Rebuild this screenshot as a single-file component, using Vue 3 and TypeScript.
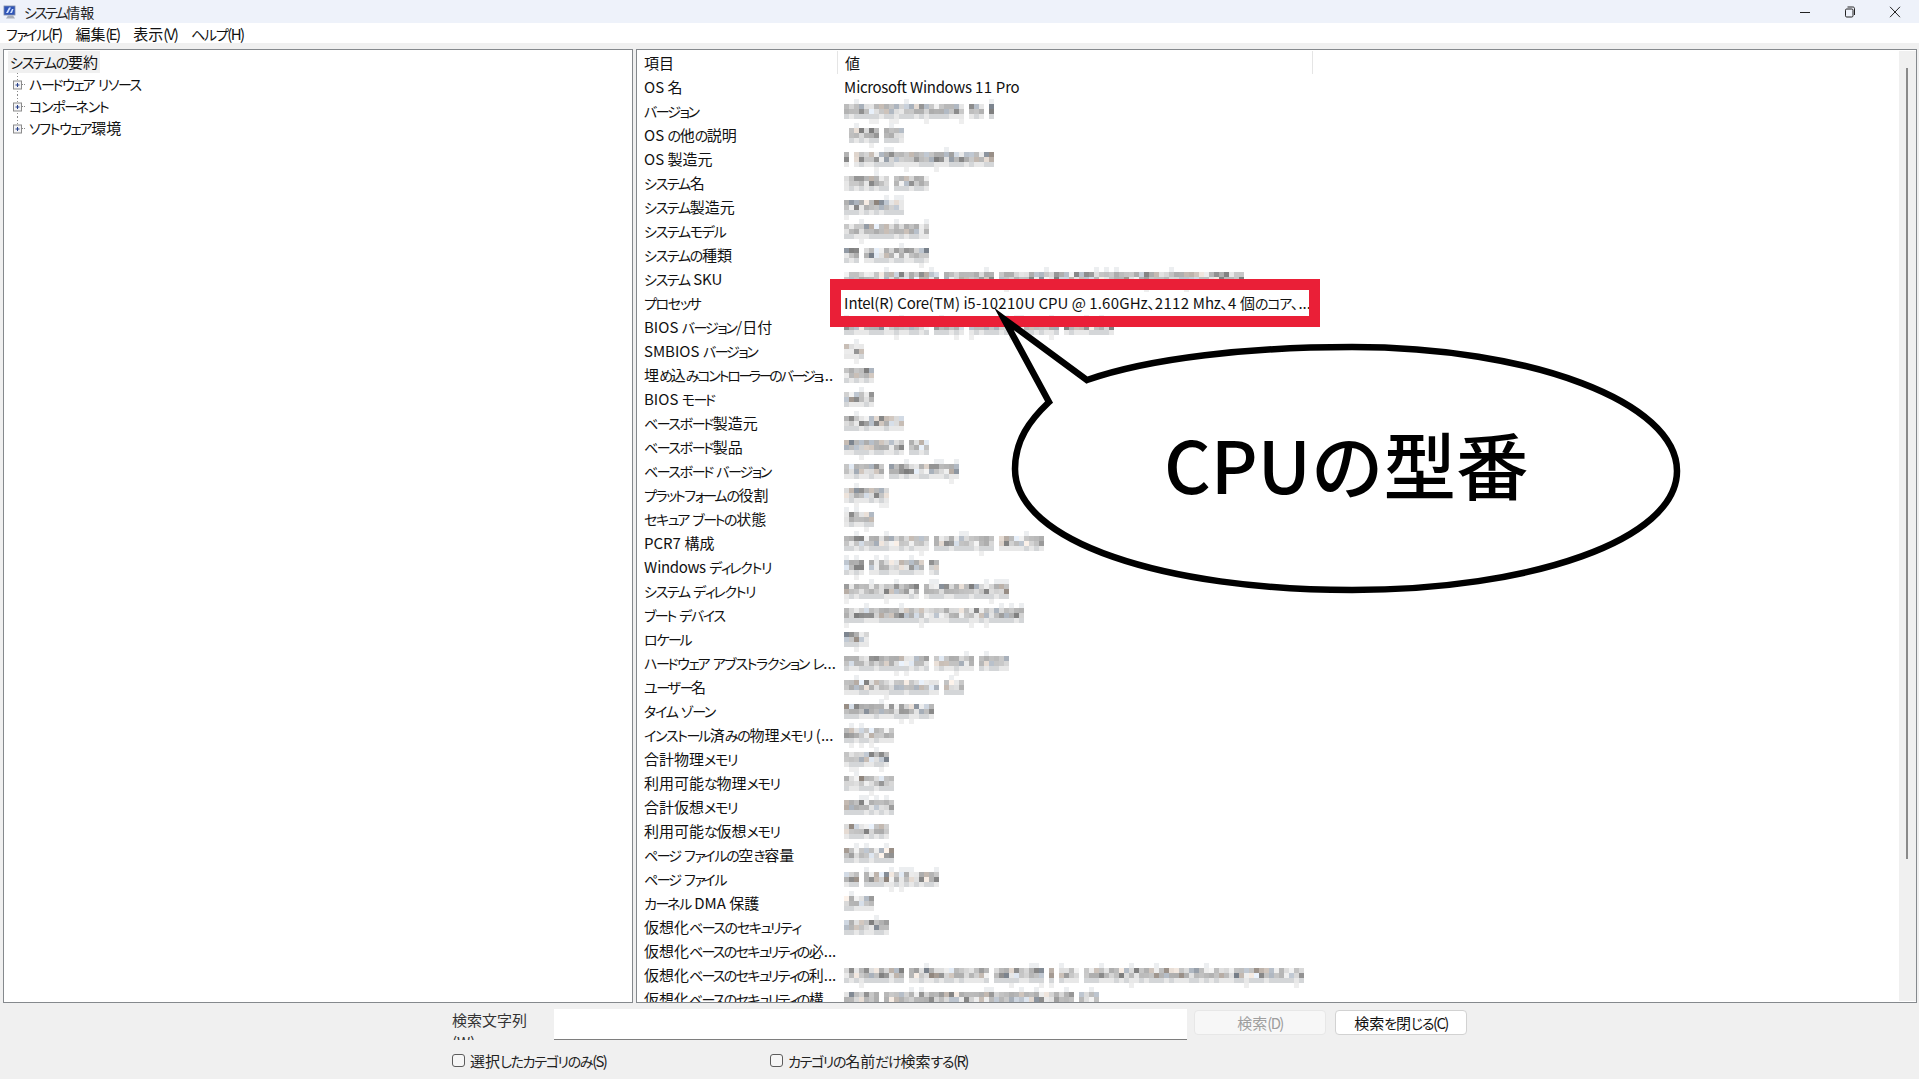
<script setup lang="ts">
import { h } from 'vue'

interface Cell { x: number; y: number; c: string }
interface Row { k: string; v?: string; w?: number }
interface Seg { t: string; c: string }

const raw: Row[] = [
  { k: 'OS 名', v: 'Microsoft Windows 11 Pro' },
  { k: 'バージョン', w: 150 },
  { k: 'OS の他の説明', w: 60 },
  { k: 'OS 製造元', w: 150 },
  { k: 'システム名', w: 85 },
  { k: 'システム製造元', w: 60 },
  { k: 'システムモデル', w: 85 },
  { k: 'システムの種類', w: 85 },
  { k: 'システム SKU', w: 400 },
  { k: 'プロセッサ', v: 'Intel(R) Core(TM) i5-10210U CPU @ 1.60GHz、2112 Mhz、4 個のコア、...' },
  { k: 'BIOS バージョン/日付', w: 270 },
  { k: 'SMBIOS バージョン', w: 20 },
  { k: '埋め込みコントローラーのバージョ...', w: 30 },
  { k: 'BIOS モード', w: 30 },
  { k: 'ベースボード製造元', w: 60 },
  { k: 'ベースボード製品', w: 85 },
  { k: 'ベースボード バージョン', w: 115 },
  { k: 'プラットフォームの役割', w: 45 },
  { k: 'セキュア ブートの状態', w: 30 },
  { k: 'PCR7 構成', w: 200 },
  { k: 'Windows ディレクトリ', w: 95 },
  { k: 'システム ディレクトリ', w: 165 },
  { k: 'ブート デバイス', w: 180 },
  { k: 'ロケール', w: 30 },
  { k: 'ハードウェア アブストラクション レ...', w: 165 },
  { k: 'ユーザー名', w: 120 },
  { k: 'タイム ゾーン', w: 90 },
  { k: 'インストール済みの物理メモリ (...', w: 50 },
  { k: '合計物理メモリ', w: 50 },
  { k: '利用可能な物理メモリ', w: 50 },
  { k: '合計仮想メモリ', w: 50 },
  { k: '利用可能な仮想メモリ', w: 50 },
  { k: 'ページ ファイルの空き容量', w: 50 },
  { k: 'ページ ファイル', w: 95 },
  { k: 'カーネル DMA 保護', w: 30 },
  { k: '仮想化ベースのセキュリティ', w: 45 },
  { k: '仮想化ベースのセキュリティの必...' },
  { k: '仮想化ベースのセキュリティの利...', w: 460 },
  { k: '仮想化ベースのセキュリティの構...', w: 255 },
]

let seed = 20240611
function rnd(): number {
  seed = (seed * 1664525 + 1013904223) >>> 0
  return seed / 4294967296
}
function shade(): string {
  const r = rnd()
  const g = r < 0.14 ? 125 + rnd() * 35 : r < 0.68 ? 172 + rnd() * 30 : 208 + rnd() * 36
  const t = rnd()
  const dr = t < 0.12 ? 10 : t < 0.24 ? -8 : 0
  const db = t < 0.12 ? -8 : t < 0.24 ? 10 : 0
  return `rgb(${Math.round(g + dr)},${Math.round(g)},${Math.round(g + db)})`
}
function mosaic(w: number): Cell[] {
  const out: Cell[] = []
  const cols = Math.round(w / 5)
  for (let i = 0; i < cols; i++) {
    if (rnd() < 0.06) continue
    if (rnd() < 0.16) out.push({ x: i * 5, y: 0, c: '#eceef0' })
    out.push({ x: i * 5, y: 5, c: shade() })
    out.push({ x: i * 5, y: 10, c: shade() })
    out.push({ x: i * 5, y: 15, c: rnd() < 0.45 ? '#e8e8e8' : '#d4d6d8' })
    if (rnd() < 0.08) out.push({ x: i * 5, y: 20, c: '#eeeeee' })
  }
  return out
}
function tightness(k: string): string {
  if (k.startsWith('埋め')) return 'tight-a'
  if (k.startsWith('仮想化') && k.endsWith('...')) return 'tight-b'
  return ''
}
const rows = raw.map((r) => ({ ...r, tight: tightness(r.k), cells: r.w ? mosaic(r.w) : [] }))
const tree = ['ハードウェア リソース', 'コンポーネント', 'ソフトウェア環境']
const menus = ['ファイル(F)', '編集(E)', '表示(V)', 'ヘルプ(H)']

// Yu Gothic UI sets kana and hotkey suffixes tighter than Noto does.
function kind(ch: string): string {
  if (/[ァィゥェォッャュョー]/.test(ch)) return 'k2'
  if (/[\u3040-\u30ff]/.test(ch)) return 'k1'
  if (/[a-z]/.test(ch)) return 'lo'
  if (/[0-9]/.test(ch)) return 'di'
  return 'ot'
}
function segments(s: string): Seg[] {
  const out: Seg[] = []
  const m = s.match(/\([A-Z]\)$/)
  const body = m ? s.slice(0, -3) : s
  for (const ch of body) {
    const c = kind(ch)
    const last = out[out.length - 1]
    if (last && last.c === c) last.t += ch
    else out.push({ t: ch, c })
  }
  if (m) out.push({ t: m[0], c: 'hk' })
  return out
}
const T = (props: { s: string }) => segments(props.s).map((p) => h('span', { class: p.c }, p.t))
T.props = ['s']
</script>

<template>
  <div class="window">
    <header class="title">
      <svg class="app-icon" width="14" height="14" viewBox="0 0 14 14">
        <rect x="1" y="1" width="11" height="9" fill="#2f55b8" stroke="#7d8ba8" stroke-width="0.8" />
        <path d="M3 8 6 2.5h2L5 8zM7 8l2-4h1.5L9 8z" fill="#cfe0ff" />
        <path d="M5 10.5h5l2 3H3z" fill="#a7adb8" />
      </svg>
      <span class="title-text"><T s="システム情報" /></span>
      <div class="controls">
        <span class="ctl"><svg width="12" height="12" viewBox="0 0 12 12"><path d="M1 6.5h10" stroke="#222" fill="none" /></svg></span>
        <span class="ctl"><svg width="12" height="12" viewBox="0 0 12 12"><rect x="1.5" y="3" width="7.5" height="8" rx="1.2" stroke="#222" fill="none" /><path d="M3.5 1h5.3c1.2 0 1.7.6 1.7 1.7V9" stroke="#222" fill="none" /></svg></span>
        <span class="ctl"><svg width="12" height="12" viewBox="0 0 12 12"><path d="M1 .8l10 10.4M11 .8 1 11.2" stroke="#222" fill="none" /></svg></span>
      </div>
    </header>

    <nav class="menu">
      <span v-for="m in menus" :key="m" class="menu-item"><T :s="m" /></span>
    </nav>

    <main class="panes">
      <section class="tree">
        <div class="root"><span class="root-label"><T s="システムの要約" /></span></div>
        <div v-for="(t, i) in tree" :key="t" class="node">
          <svg class="twig" width="26" height="22" viewBox="0 0 26 22">
            <path :d="i === 2 ? 'M13.5 0V11' : 'M13.5 0V22'" stroke="#8a8a8a" stroke-dasharray="1 2" fill="none" />
            <path d="M18 11.5h3" stroke="#8a8a8a" stroke-dasharray="1 1" fill="none" />
            <rect x="9.5" y="8" width="8" height="8" fill="#f4f4f6" stroke="#8b8b8b" />
            <path d="M11.5 12h4M13.5 10v4" stroke="#27408b" fill="none" />
          </svg>
          <span><T :s="t" /></span>
        </div>
      </section>

      <section class="details">
        <div class="table">
          <div class="thead">
            <span class="th th-k">項目</span>
            <span class="th th-v">値</span>
          </div>
          <div v-for="r in rows" :key="r.k" class="tr">
            <span class="td-k" :class="r.tight"><T :s="r.k" /></span>
            <span class="td-v">
              <T v-if="r.v" :s="r.v" />
              <svg v-else-if="r.w" class="mosaic" :width="r.w" height="25" shape-rendering="crispEdges">
                <rect v-for="(c, i) in r.cells" :key="i" :x="c.x" :y="c.y" width="5" height="5" :fill="c.c" />
              </svg>
            </span>
          </div>
        </div>
        <div class="scroll"><div class="thumb"></div></div>
      </section>

      <div class="red-box"></div>
      <svg class="bubble" width="1919" height="1079" viewBox="0 0 1919 1079">
        <path
          d="M1004 319 L1087 380 C1150 358 1250 347 1352 347 C1531 347 1677 402 1677 471 C1677 540 1531 590 1352 590 C1165 590 1015 542 1015 469 C1015 440 1030 420 1049 402 Z"
          fill="#fff" stroke="#000" stroke-width="6.5" stroke-miterlimit="12"
        />
      </svg>
      <div class="bubble-text">CPUの型番</div>
    </main>

    <footer class="search">
      <div class="search-row">
        <label class="search-label"><T s="検索文字列(W):" /></label>
        <input class="search-input" type="text" />
        <button class="btn btn-off" type="button"><T s="検索(D)" /></button>
        <button class="btn" type="button"><T s="検索を閉じる(C)" /></button>
      </div>
      <div class="check-row">
        <label class="check check-a"><input type="checkbox" /><span><T s="選択したカテゴリのみ(S)" /></span></label>
        <label class="check"><input type="checkbox" /><span><T s="カテゴリの名前だけ検索する(R)" /></span></label>
      </div>
    </footer>
  </div>
</template>

<style>
html, body { margin: 0; background: #f0f0f0; overflow: hidden; }
.k1 { font-size: 14px; letter-spacing: -1.3px; }
.k2 { font-size: 14px; letter-spacing: -2.5px; }
.lo { letter-spacing: -0.35px; }
.di { letter-spacing: 0.3px; }
.hk { letter-spacing: -1.7px; }
.tight-a .k1 { letter-spacing: -2.2px; }
.tight-a .k2 { letter-spacing: -3.4px; }
.tight-b .k1 { letter-spacing: -1.6px; }
.tight-b .k2 { letter-spacing: -2.8px; }
</style>

<style scoped>
.window {
  width: 1919px;
  height: 1079px;
  display: flex;
  flex-direction: column;
  background: #f0f0f0;
  color: #111;
  font-family: "Noto Sans CJK JP", "Noto Sans", sans-serif;
  font-size: 15px;
  font-feature-settings: "palt";
  overflow: hidden;
}
.title {
  height: 23px;
  flex: none;
  display: flex;
  align-items: center;
  background: #eef2fa;
  padding-left: 3px;
  padding-right: 2px;
}
.app-icon { flex: none; }
.title-text { margin-left: 7px; color: #222; font-size: 14px; }
.title-text :deep(.k1) { letter-spacing: -2.2px; }
.controls { margin-left: auto; display: flex; }
.ctl { width: 45px; height: 23px; display: flex; align-items: center; justify-content: center; }
.menu {
  height: 20px;
  flex: none;
  display: flex;
  align-items: center;
  gap: 14px;
  background: #fff;
  padding-left: 6px;
}
.panes {
  margin-top: 6px;
  height: 954px;
  flex: none;
  display: flex;
  gap: 3px;
  padding: 0 2px 0 3px;
}
.tree {
  width: 630px;
  flex: none;
  box-sizing: border-box;
  background: #fff;
  border: 1px solid #85898d;
  padding-top: 1px;
}
.root { height: 22px; padding-left: 4px; display: flex; }
.root-label { background: #f0f0f0; padding: 0 2px; width: 88px; line-height: 22px; white-space: nowrap; }
.node { height: 22px; display: flex; align-items: center; line-height: 22px; }
.node:first-of-type { margin-top: 1px; }
.twig { flex: none; margin-right: -1px; }
.details {
  flex: 1;
  display: flex;
  min-width: 0;
  box-sizing: border-box;
  background: #fff;
  border: 1px solid #85898d;
  padding: 1px 0 0 0;
}
.table { flex: 1; min-width: 0; overflow: hidden; }
.thead { display: flex; height: 24px; }
.th { box-sizing: border-box; height: 23px; line-height: 23px; border-right: 1px solid #e5e5e5; }
.th-k { width: 201px; padding-left: 7px; }
.th-v { width: 475px; padding-left: 7px; }
.tr { display: flex; height: 24px; line-height: 24px; white-space: nowrap; }
.td-k { width: 201px; flex: none; padding-left: 7px; box-sizing: border-box; overflow: hidden; }
.td-v { flex: 1; padding-left: 6px; position: relative; }
.mosaic { position: absolute; left: 6px; top: 0; }
.scroll { width: 17px; flex: none; background: #f0f0f0; margin-bottom: 1px; }
.thumb { width: 2px; height: 791px; margin: 17px 0 0 7px; background: #8a8a8a; }

.red-box {
  position: absolute;
  left: 830px;
  top: 279px;
  width: 468px;
  height: 26px;
  border: 11px solid #ea1f37;
  pointer-events: none;
}
.bubble { position: absolute; left: 0; top: 0; pointer-events: none; }
.bubble-text {
  position: absolute;
  left: 1164px;
  top: 411px;
  font-size: 72.5px;
  font-weight: 500;
  line-height: 104px;
  color: #000;
  white-space: nowrap;
  font-feature-settings: normal;
}

.search { flex: 1; padding-left: 452px; }
.search-row { display: flex; margin-top: 6px; height: 31px; align-items: flex-start; }
.search-label {
  width: 102px;
  flex: none;
  height: 31px;
  line-height: 22px;
  overflow: hidden;
  padding-right: 22px;
  box-sizing: border-box;
  color: #333;
}
.search-input {
  width: 633px;
  height: 31px;
  flex: none;
  box-sizing: border-box;
  border: 0;
  border-bottom: 1px solid #7e7e7e;
  background: #fff;
  outline: none;
  margin: 0 7px 0 0;
  padding: 0;
}
.btn {
  width: 132px;
  height: 25px;
  margin: 1px 9px 0 0;
  padding: 0;
  box-sizing: border-box;
  flex: none;
  background: #fff;
  border: 1px solid #d2d2d2;
  border-radius: 4px;
  color: #111;
  font: inherit;
  font-feature-settings: inherit;
  line-height: 23px;
}
.btn-off { background: #f7f7f7; border-color: #e7e7e7; color: #9e9e9e; }
.check-row { display: flex; margin-top: 8px; }
.check { display: flex; align-items: center; height: 24px; gap: 5px; color: #222; }
.check-a { width: 318px; flex: none; }
.check input {
  appearance: none;
  width: 13px;
  height: 13px;
  margin: 0;
  box-sizing: border-box;
  border: 1px solid #5c5c5c;
  border-radius: 3px;
  background: #f6f6f6;
}
</style>
